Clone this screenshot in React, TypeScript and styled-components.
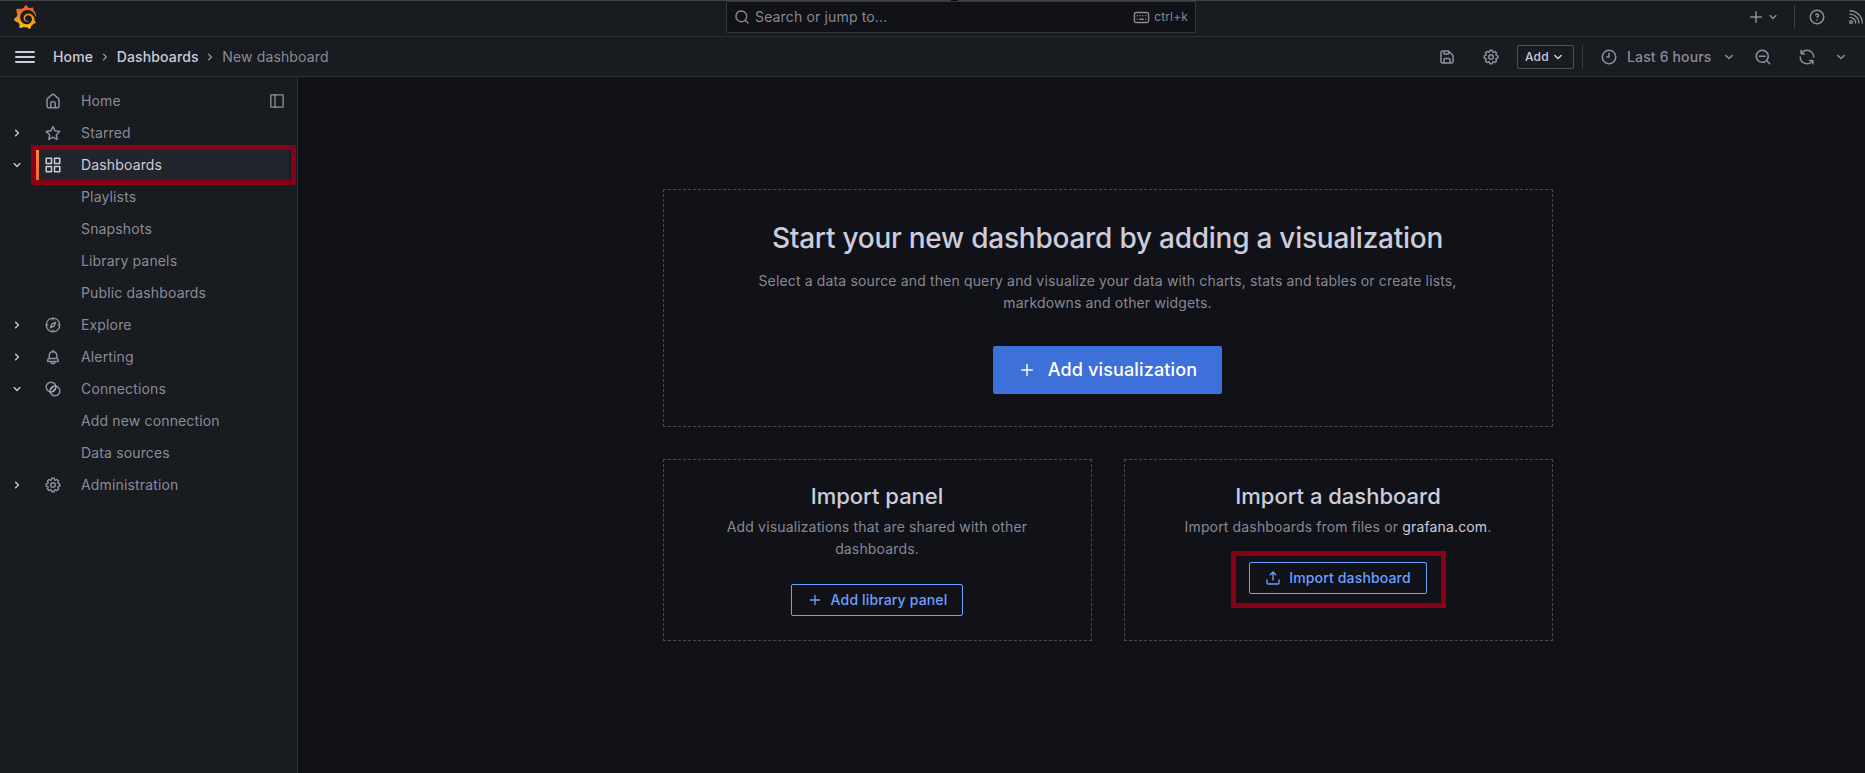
import React from "react";
import styled, { createGlobalStyle, css } from "styled-components";
import { SiGrafana } from "react-icons/si";

const c = {
  canvas: "#111217",
  primary: "#181b1f",
  secondary: "#22252b",
  text: "rgb(204, 204, 220)",
  muted: "rgba(204, 204, 220, 0.65)",
  weak: "rgba(204, 204, 220, 0.12)",
  medium: "rgba(204, 204, 220, 0.2)",
  strong: "rgba(204, 204, 220, 0.3)",
  link: "#6e9fff",
  blue: "#3d71d9",
  mark: "#880015",
};

const GlobalStyle = createGlobalStyle`
  *, *::before, *::after { box-sizing: border-box; }
  html, body { margin: 0; height: 100%; overflow: hidden; background: ${c.canvas}; }
  body {
    font-family: Inter, "Liberation Sans", sans-serif;
    font-size: 14px;
    line-height: 22px;
    letter-spacing: 0.15px;
    color: ${c.text};
  }
  h1, h3, p { margin: 0; }
  button { font: inherit; letter-spacing: inherit; cursor: pointer; }
  a { color: inherit; text-decoration: none; }
`;

const paths = {
  plus: "M19,11H13V5a1,1,0,0,0-2,0v6H5a1,1,0,0,0,0,2h6v6a1,1,0,0,0,2,0V13h6a1,1,0,0,0,0-2Z",
  angleDown:
    "M17,9.17a1,1,0,0,0-1.41,0L12,12.71,8.46,9.17a1,1,0,0,0-1.41,0,1,1,0,0,0,0,1.42l4.24,4.24a1,1,0,0,0,1.42,0L17,10.59A1,1,0,0,0,17,9.17Z",
  angleRight:
    "M14.83,11.29,10.59,7.05a1,1,0,0,0-1.42,0,1,1,0,0,0,0,1.41L12.71,12,9.17,15.54a1,1,0,0,0,0,1.41,1,1,0,0,0,.71.29,1,1,0,0,0,.71-.29l4.24-4.24A1,1,0,0,0,14.83,11.29Z",
  search:
    "M21.71,20.29,18,16.61A9,9,0,1,0,16.61,18l3.68,3.68a1,1,0,0,0,1.42,0A1,1,0,0,0,21.71,20.29ZM11,18a7,7,0,1,1,7-7A7,7,0,0,1,11,18Z",
  searchMinus:
    "M21.71,20.29,18,16.61A9,9,0,1,0,16.61,18l3.68,3.68a1,1,0,0,0,1.42,0A1,1,0,0,0,21.71,20.29ZM11,18a7,7,0,1,1,7-7A7,7,0,0,1,11,18Zm4-8H7a1,1,0,0,0,0,2h8a1,1,0,0,0,0-2Z",
  clock:
    "M12,2A10,10,0,1,0,22,12,10,10,0,0,0,12,2Zm0,18a8,8,0,1,1,8-8A8,8,0,0,1,12,20ZM12,6a1,1,0,0,0-1,1v4H9a1,1,0,0,0,0,2h3a1,1,0,0,0,1-1V7A1,1,0,0,0,12,6Z",
  question:
    "M11.29,15.29a1.58,1.58,0,0,0-.12.15.76.76,0,0,0-.09.18.64.64,0,0,0-.06.18,1.36,1.36,0,0,0,0,.2.84.84,0,0,0,.08.38.9.9,0,0,0,.54.54.94.94,0,0,0,.76,0,.9.9,0,0,0,.54-.54A1,1,0,0,0,13,16a1,1,0,0,0-.29-.71A1,1,0,0,0,11.29,15.29ZM12,2A10,10,0,1,0,22,12,10,10,0,0,0,12,2Zm0,18a8,8,0,1,1,8-8A8,8,0,0,1,12,20ZM12,7A3,3,0,0,0,9.4,8.5a1,1,0,1,0,1.73,1A1,1,0,0,1,12,9a1,1,0,0,1,0,2,1,1,0,1,0,0,2,3,3,0,0,0,0-6Z",
  save: "m20.71 9.29l-6-6a1 1 0 0 0-.32-.21A1.09 1.09 0 0 0 14 3H6a3 3 0 0 0-3 3v12a3 3 0 0 0 3 3h12a3 3 0 0 0 3-3v-8a1 1 0 0 0-.29-.71ZM9 5h4v2H9Zm6 14H9v-3a1 1 0 0 1 1-1h4a1 1 0 0 1 1 1Zm4-1a1 1 0 0 1-1 1h-1v-3a3 3 0 0 0-3-3h-4a3 3 0 0 0-3 3v3H6a1 1 0 0 1-1-1V6a1 1 0 0 1 1-1h1v3a1 1 0 0 0 1 1h6a1 1 0 0 0 1-1V6.41l4 4Z",
  sync: "M19.91,15.51H15.38a1,1,0,0,0,0,2h2.4A8,8,0,0,1,4,12a1,1,0,1,0-2,0,10,10,0,0,0,16.88,7.23V21a1,1,0,0,0,2,0V16.5A1,1,0,0,0,19.91,15.51ZM12,2A10,10,0,0,0,5.12,4.77V3a1,1,0,0,0-2,0V7.5a1,1,0,0,0,1,1h4.5a1,1,0,0,0,0-2H6.22A8,8,0,0,1,20,12a1,1,0,0,0,2,0A10,10,0,0,0,12,2Z",
  apps: "M10,13H3a1,1,0,0,0-1,1v7a1,1,0,0,0,1,1h7a1,1,0,0,0,1-1V14A1,1,0,0,0,10,13ZM9,20H4V15H9ZM21,2H14a1,1,0,0,0-1,1v7a1,1,0,0,0,1,1h7a1,1,0,0,0,1-1V3A1,1,0,0,0,21,2ZM20,9H15V4h5Zm1,4H14a1,1,0,0,0-1,1v7a1,1,0,0,0,1,1h7a1,1,0,0,0,1-1V14A1,1,0,0,0,21,13Zm-1,7H15V15h5ZM10,2H3A1,1,0,0,0,2,3v7a1,1,0,0,0,1,1h7a1,1,0,0,0,1-1V3A1,1,0,0,0,10,2ZM9,9H4V4H9Z",
  home: "M20,8h0L14,2.74a3,3,0,0,0-4,0L4,8a3,3,0,0,0-1,2.26V19a3,3,0,0,0,3,3H18a3,3,0,0,0,3-3V10.25A3,3,0,0,0,20,8ZM14,20H10V15a1,1,0,0,1,1-1h2a1,1,0,0,1,1,1Zm5-1a1,1,0,0,1-1,1H16V15a3,3,0,0,0-3-3H11a3,3,0,0,0-3,3v5H6a1,1,0,0,1-1-1V10.25a1,1,0,0,1,.34-.75l6-5.25a1,1,0,0,1,1.32,0l6,5.25a1,1,0,0,1,.34.75Z",
  star: "M22,9.67A1,1,0,0,0,21.14,9l-5.69-.83L12.9,3a1,1,0,0,0-1.8,0L8.55,8.16,2.86,9a1,1,0,0,0-.81.68,1,1,0,0,0,.25,1l4.13,4-1,5.68A1,1,0,0,0,6.9,21.44L12,18.77l5.1,2.67a.93.93,0,0,0,.46.12,1,1,0,0,0,.59-.19,1,1,0,0,0,.4-1l-1-5.68,4.13-4A1,1,0,0,0,22,9.67Zm-6.15,4a1,1,0,0,0-.29.88l.72,4.2-3.76-2a1.06,1.06,0,0,0-.94,0l-3.76,2,.72-4.2a1,1,0,0,0-.29-.88l-3-3,4.21-.61a1,1,0,0,0,.76-.55L12,5.7l1.88,3.82a1,1,0,0,0,.76.55l4.21.61Z",
  compass:
    "M12,2A10,10,0,1,0,22,12,10,10,0,0,0,12,2Zm1,17.93V19a1,1,0,0,0-2,0v.93A8,8,0,0,1,4.07,13H5a1,1,0,0,0,0-2H4.07A8,8,0,0,1,11,4.07V5a1,1,0,0,0,2,0V4.07A8,8,0,0,1,19.93,11H19a1,1,0,0,0,0,2h.93A8,8,0,0,1,13,19.93ZM15.14,7.55l-5,2.12a1,1,0,0,0-.52.52l-2.12,5a1,1,0,0,0,.21,1.1,1,1,0,0,0,.7.29.93.93,0,0,0,.4-.08l5-2.12a1,1,0,0,0,.52-.52l2.12-5a1,1,0,0,0-1.31-1.31Zm-2.49,5.1-2.28,1,1-2.28,2.28-1Z",
  bell: "M18,13.18V10a6,6,0,0,0-5-5.91V3a1,1,0,0,0-2,0V4.09A6,6,0,0,0,6,10v3.18A3,3,0,0,0,4,16v2a1,1,0,0,0,1,1H8.14a4,4,0,0,0,7.72,0H19a1,1,0,0,0,1-1V16A3,3,0,0,0,18,13.18ZM8,10a4,4,0,0,1,8,0v3H8Zm4,10a2,2,0,0,1-1.72-1h3.44A2,2,0,0,1,12,20Zm6-3H6V16a1,1,0,0,1,1-1H17a1,1,0,0,1,1,1Z",
  cog: "M21.32,9.55l-1.89-.63.89-1.78A1,1,0,0,0,20.13,6L18,3.87a1,1,0,0,0-1.15-.19l-1.78.89-.63-1.89A1,1,0,0,0,13.5,2h-3a1,1,0,0,0-.95.68L8.92,4.57,7.14,3.68A1,1,0,0,0,6,3.87L3.87,6a1,1,0,0,0-.19,1.15l.89,1.78-1.89.63A1,1,0,0,0,2,10.5v3a1,1,0,0,0,.68.95l1.89.63-.89,1.78A1,1,0,0,0,3.87,18L6,20.13a1,1,0,0,0,1.15.19l1.78-.89.63,1.89a1,1,0,0,0,.95.68h3a1,1,0,0,0,.95-.68l.63-1.89,1.78.89A1,1,0,0,0,18,20.13L20.13,18a1,1,0,0,0,.19-1.15l-.89-1.78,1.89-.63A1,1,0,0,0,22,13.5v-3A1,1,0,0,0,21.32,9.55ZM20,12.78l-1.2.4A2,2,0,0,0,17.64,16l.57,1.14-1.1,1.1L16,17.64a2,2,0,0,0-2.79,1.16l-.4,1.2H11.22l-.4-1.2A2,2,0,0,0,8,17.64l-1.14.57-1.1-1.1L6.36,16A2,2,0,0,0,5.2,13.18L4,12.78V11.22l1.2-.4A2,2,0,0,0,6.36,8L5.79,6.89l1.1-1.1L8,6.36A2,2,0,0,0,10.82,5.2l.4-1.2h1.56l.4,1.2A2,2,0,0,0,16,6.36l1.14-.57,1.1,1.1L17.64,8a2,2,0,0,0,1.16,2.79l1.2.4ZM12,8a4,4,0,1,0,4,4A4,4,0,0,0,12,8Zm0,6a2,2,0,1,1,2-2A2,2,0,0,1,12,14Z",
  upload:
    "m8.71 7.71L11 5.41V15a1 1 0 0 0 2 0V5.41l2.29 2.3a1 1 0 0 0 1.42 0a1 1 0 0 0 0-1.42l-4-4a1 1 0 0 0-.33-.21a1 1 0 0 0-.76 0a1 1 0 0 0-.33.21l-4 4a1 1 0 1 0 1.42 1.42ZM21 14a1 1 0 0 0-1 1v4a1 1 0 0 1-1 1H5a1 1 0 0 1-1-1v-4a1 1 0 0 0-2 0v4a3 3 0 0 0 3 3h14a3 3 0 0 0 3-3v-4a1 1 0 0 0-1-1Z",
};

type IconName = keyof typeof paths;

const Svg = styled.svg<{ $size: number }>`
  display: block;
  flex: none;
  width: ${(p) => p.$size}px;
  height: ${(p) => p.$size}px;
  fill: currentColor;
`;

const Icon = ({ name, size = 18 }: { name: IconName; size?: number }) => (
  <Svg $size={size} viewBox="0 0 24 24" aria-hidden>
    <path d={paths[name]} />
  </Svg>
);

const StrokeSvg = styled(Svg)`
  fill: none;
  stroke: currentColor;
  stroke-width: 2;
  stroke-linecap: round;
  stroke-linejoin: round;
`;

const DockIcon = () => (
  <StrokeSvg $size={16} viewBox="0 0 24 24" aria-hidden>
    <rect x="2.75" y="2.75" width="18.5" height="18.5" rx="0.6" />
    <path d="M9 3v18" />
  </StrokeSvg>
);

const ConnectionsIcon = () => (
  <StrokeSvg $size={18} viewBox="0 0 24 24" aria-hidden>
    <circle cx="9.4" cy="9.4" r="6.5" />
    <circle cx="14.6" cy="14.6" r="6.5" />
    <path d="M8.8 12.2l3.4-3.4M11.8 15.2l3.4-3.4" />
  </StrokeSvg>
);

const KeyboardIcon = () => (
  <StrokeSvg $size={17} viewBox="0 0 24 24" aria-hidden>
    <rect x="2" y="5" width="20" height="14" rx="2.4" />
    <path d="M6 9.6h.01M10 9.6h.01M14 9.6h.01M18 9.6h.01M6 14.4h.01M9.5 14.4h5M18 14.4h.01" />
  </StrokeSvg>
);

const RssIcon = () => (
  <StrokeSvg $size={16} viewBox="0 0 24 24" aria-hidden>
    <circle cx="4.6" cy="19.6" r="2.1" />
    <path d="M3 12.6a8.4 8.4 0 0 1 8.4 8.4M3 7.6a13.4 13.4 0 0 1 13.4 13.4M3 2.6a18.4 18.4 0 0 1 18.4 18.4" />
  </StrokeSvg>
);

const Page = styled.div`
  display: flex;
  flex-direction: column;
  height: 100vh;
  min-height: 773px;
  overflow: hidden;
  background: ${c.canvas};
`;

const TopEdge = styled.div`
  flex: none;
  height: 1px;
  background: #3f4346;
`;

const Notch = styled.div`
  width: 7px;
  height: 1px;
  margin-left: 951px;
  background: #0b0c0e;
`;

const TopBar = styled.header`
  display: flex;
  align-items: flex-start;
  flex: none;
  height: 36px;
  background: ${c.primary};
  border-bottom: 1px solid ${c.weak};
`;

const LogoSlot = styled.div`
  display: flex;
  width: 726px;
  padding: 4px 0 0 13px;
`;

const Logo = styled(SiGrafana)`
  width: 24px;
  height: 24px;
`;

const GradientDefs = styled.svg`
  display: block;
  width: 0;
  height: 0;
`;

const SearchBox = styled.div`
  display: flex;
  align-items: center;
  width: 470px;
  height: 32px;
  padding: 0 7px;
  gap: 5px;
  color: ${c.muted};
  background: ${c.canvas};
  border: 1px solid ${c.medium};
  border-radius: 2px;
`;

const Placeholder = styled.span`
  flex: 1;
`;

const Shortcut = styled.span`
  display: flex;
  align-items: center;
  gap: 4px;
  font-size: 12px;
`;

const TopActions = styled.div`
  display: flex;
  align-items: center;
  margin-left: auto;
  height: 32px;
  color: ${c.muted};
`;

const IconPair = styled.button`
  display: flex;
  align-items: center;
  margin-right: 13px;
  padding: 0;
  color: inherit;
  background: none;
  border: 0;
`;

const Divider = styled.span<{ $gap: number }>`
  width: 1px;
  height: 24px;
  margin-right: ${(p) => p.$gap}px;
  background: ${c.medium};
`;

const IconButton = styled.button<{ $gap?: number }>`
  display: flex;
  margin-right: ${(p) => p.$gap ?? 0}px;
  padding: 0;
  color: inherit;
  background: none;
  border: 0;
`;

const NavBar = styled.div`
  display: flex;
  align-items: center;
  flex: none;
  height: 40px;
  padding: 1px 15px 0;
  background: ${c.primary};
  border-bottom: 1px solid ${c.weak};
`;

const MenuButton = styled.button`
  display: flex;
  flex-direction: column;
  justify-content: space-between;
  width: 20px;
  height: 12px;
  margin-right: 18px;
  padding: 0;
  background: none;
  border: 0;

  span {
    height: 2px;
    border-radius: 1px;
    background: ${c.text};
  }
`;

const Breadcrumbs = styled.nav`
  display: flex;
  align-items: center;
  gap: 3.75px;
`;

const Crumb = styled.a<{ $current?: boolean }>`
  font-weight: ${(p) => (p.$current ? 400 : 500)};
  color: ${(p) => (p.$current ? c.muted : c.text)};
`;

const CrumbSeparator = styled.span`
  color: ${c.muted};
`;

const Toolbar = styled.div`
  display: flex;
  align-items: center;
  margin-left: auto;
  color: ${c.muted};
`;

const AddButton = styled.button`
  display: flex;
  align-items: center;
  width: 57px;
  height: 24px;
  margin-right: 8px;
  padding: 0 0 0 7px;
  font-size: 12px;
  font-weight: 500;
  color: ${c.text};
  background: none;
  border: 1px solid ${c.strong};
  border-radius: 2px;
`;

const TimePicker = styled.button`
  display: flex;
  align-items: center;
  margin-right: 16px;
  padding: 0;
  font-weight: 500;
  color: inherit;
  background: none;
  border: 0;

  span {
    width: 84px;
    margin: 0 9px;
    text-align: left;
    white-space: nowrap;
  }
`;

const Body = styled.div`
  display: flex;
  flex: 1;
`;

const Sidebar = styled.aside`
  flex: none;
  width: 298px;
  padding-top: 8px;
  background: ${c.primary};
  border-right: 1px solid ${c.weak};
`;

const NavRow = styled.div`
  position: relative;
  display: flex;
  align-items: center;
  height: 32px;
  padding: 0 8px 0 9px;
`;

const ChevronSlot = styled.span`
  display: flex;
  width: 23px;
  color: ${c.text};
`;

const NavLink = styled.a<{ $active?: boolean }>`
  display: flex;
  align-items: center;
  flex: 1;
  height: 32px;
  padding: 0 4px 0 12px;
  color: ${c.muted};

  ${(p) =>
    p.$active &&
    css`
      color: ${c.text};
      background: ${c.secondary};
      &::before {
        content: "";
        width: 4px;
        height: 32px;
        margin: 0 5px 0 -9px;
        background: linear-gradient(#ff8833, #f55f3e);
      }
    `}
`;

const NavIconSlot = styled.span`
  display: flex;
  width: 37px;
`;

const DockSlot = styled.span`
  display: flex;
  margin-left: auto;
  color: ${c.muted};
`;

const SidebarMark = styled.div`
  position: absolute;
  top: -4px;
  left: 31px;
  width: 265px;
  height: 40px;
  border: 5px solid ${c.mark};
`;

const Main = styled.main`
  flex: 1;
  padding: 112px 312px 0 365px;
`;

const Cards = styled.div`
  display: grid;
  grid-template-columns: 1fr 1fr;
  gap: 32px;
`;

const Card = styled.section<{ $wide?: boolean }>`
  display: flex;
  flex-direction: column;
  align-items: center;
  grid-column: ${(p) => (p.$wide ? "1 / -1" : "auto")};
  height: ${(p) => (p.$wide ? 238 : 182)}px;
  padding: ${(p) => (p.$wide ? "32px 33px 32px 32px" : "24px 25px 24px 24px")};
  text-align: center;
  border: 1px dashed ${c.strong};
`;

const Title = styled.h1`
  font-size: 28px;
  line-height: 32px;
  font-weight: 500;
  letter-spacing: -0.25px;
`;

const Subtitle = styled.h3`
  font-size: 22px;
  line-height: 24px;
  font-weight: 500;
  letter-spacing: 0;
`;

const Description = styled.p<{ $wide?: boolean }>`
  max-width: ${(p) => (p.$wide ? "720px" : "none")};
  margin: ${(p) => (p.$wide ? "16px 0 32px" : "8px 0 24px")};
  color: ${c.muted};

  a {
    color: ${c.text};
  }
`;

const PrimaryButton = styled.button`
  display: flex;
  align-items: center;
  justify-content: center;
  width: 229px;
  height: 48px;
  gap: 12px;
  font-size: 18px;
  font-weight: 500;
  color: #fff;
  background: ${c.blue};
  border: 0;
  border-radius: 2px;
`;

const OutlineButton = styled.button<{ $width: number }>`
  display: flex;
  align-items: center;
  justify-content: center;
  width: ${(p) => p.$width}px;
  height: 32px;
  padding: 0;
  gap: 8px;
  font-weight: 500;
  color: ${c.link};
  background: none;
  border: 1px solid ${c.link};
  border-radius: 2px;
`;

const ImportSlot = styled.div`
  position: relative;
`;

const ImportMark = styled.div`
  position: absolute;
  top: -11px;
  left: -18px;
  width: 215px;
  height: 57px;
  border: 5px solid ${c.mark};
`;

type Item = {
  label: string;
  icon?: React.ReactNode;
  chevron?: "angleRight" | "angleDown";
  active?: boolean;
  dock?: boolean;
};

const items: Item[] = [
  { label: "Home", icon: <Icon name="home" />, dock: true },
  { label: "Starred", icon: <Icon name="star" />, chevron: "angleRight" },
  { label: "Dashboards", icon: <Icon name="apps" />, chevron: "angleDown", active: true },
  { label: "Playlists" },
  { label: "Snapshots" },
  { label: "Library panels" },
  { label: "Public dashboards" },
  { label: "Explore", icon: <Icon name="compass" />, chevron: "angleRight" },
  { label: "Alerting", icon: <Icon name="bell" />, chevron: "angleRight" },
  { label: "Connections", icon: <ConnectionsIcon />, chevron: "angleDown" },
  { label: "Add new connection" },
  { label: "Data sources" },
  { label: "Administration", icon: <Icon name="cog" />, chevron: "angleRight" },
];

export default function App() {
  return (
    <Page>
      <GlobalStyle />
      <TopEdge>
        <Notch />
      </TopEdge>
      <TopBar>
        <LogoSlot>
          <GradientDefs>
            <defs>
              <linearGradient id="logo-gradient" x1="0" y1="0" x2="0" y2="1">
                <stop offset="0.1" stopColor="#f05a28" />
                <stop offset="1" stopColor="#fbca0a" />
              </linearGradient>
            </defs>
          </GradientDefs>
          <Logo fill="url(#logo-gradient)" />
        </LogoSlot>
        <SearchBox>
          <Icon name="search" size={16} />
          <Placeholder>Search or jump to...</Placeholder>
          <Shortcut>
            <KeyboardIcon />
            ctrl+k
          </Shortcut>
        </SearchBox>
        <TopActions>
          <IconPair>
            <Icon name="plus" />
            <Icon name="angleDown" size={16} />
          </IconPair>
          <Divider $gap={13} />
          <IconButton $gap={22}>
            <Icon name="question" />
          </IconButton>
          <IconButton $gap={1}>
            <RssIcon />
          </IconButton>
        </TopActions>
      </TopBar>
      <NavBar>
        <MenuButton>
          <span />
          <span />
          <span />
        </MenuButton>
        <Breadcrumbs>
          <Crumb>Home</Crumb>
          <CrumbSeparator>
            <Icon name="angleRight" size={16} />
          </CrumbSeparator>
          <Crumb>Dashboards</Crumb>
          <CrumbSeparator>
            <Icon name="angleRight" size={16} />
          </CrumbSeparator>
          <Crumb $current>New dashboard</Crumb>
        </Breadcrumbs>
        <Toolbar>
          <IconButton $gap={26}>
            <Icon name="save" />
          </IconButton>
          <IconButton $gap={17}>
            <Icon name="cog" />
          </IconButton>
          <AddButton>
            Add
            <Icon name="angleDown" />
          </AddButton>
          <Divider $gap={17} />
          <TimePicker>
            <Icon name="clock" />
            <span>Last 6 hours</span>
            <Icon name="angleDown" />
          </TimePicker>
          <IconButton $gap={26}>
            <Icon name="searchMinus" />
          </IconButton>
          <IconButton $gap={16}>
            <Icon name="sync" />
          </IconButton>
          <IconButton>
            <Icon name="angleDown" />
          </IconButton>
        </Toolbar>
      </NavBar>
      <Body>
        <Sidebar>
          {items.map((item) => (
            <NavRow key={item.label}>
              <ChevronSlot>{item.chevron && <Icon name={item.chevron} size={16} />}</ChevronSlot>
              <NavLink $active={item.active}>
                <NavIconSlot>{item.icon}</NavIconSlot>
                {item.label}
                {item.dock && (
                  <DockSlot>
                    <DockIcon />
                  </DockSlot>
                )}
              </NavLink>
              {item.active && <SidebarMark />}
            </NavRow>
          ))}
        </Sidebar>
        <Main>
          <Cards>
            <Card $wide>
              <Title>Start your new dashboard by adding a visualization</Title>
              <Description $wide>
                Select a data source and then query and visualize your data with charts, stats and tables or create
                lists, markdowns and other widgets.
              </Description>
              <PrimaryButton>
                <Icon name="plus" />
                Add visualization
              </PrimaryButton>
            </Card>
            <Card>
              <Subtitle>Import panel</Subtitle>
              <Description>Add visualizations that are shared with other dashboards.</Description>
              <OutlineButton $width={172}>
                <Icon name="plus" size={16} />
                Add library panel
              </OutlineButton>
            </Card>
            <Card>
              <Subtitle>Import a dashboard</Subtitle>
              <Description>
                Import dashboards from files or <a>grafana.com</a>.
              </Description>
              <ImportSlot>
                <OutlineButton $width={178}>
                  <Icon name="upload" size={16} />
                  Import dashboard
                </OutlineButton>
                <ImportMark />
              </ImportSlot>
            </Card>
          </Cards>
        </Main>
      </Body>
    </Page>
  );
}
